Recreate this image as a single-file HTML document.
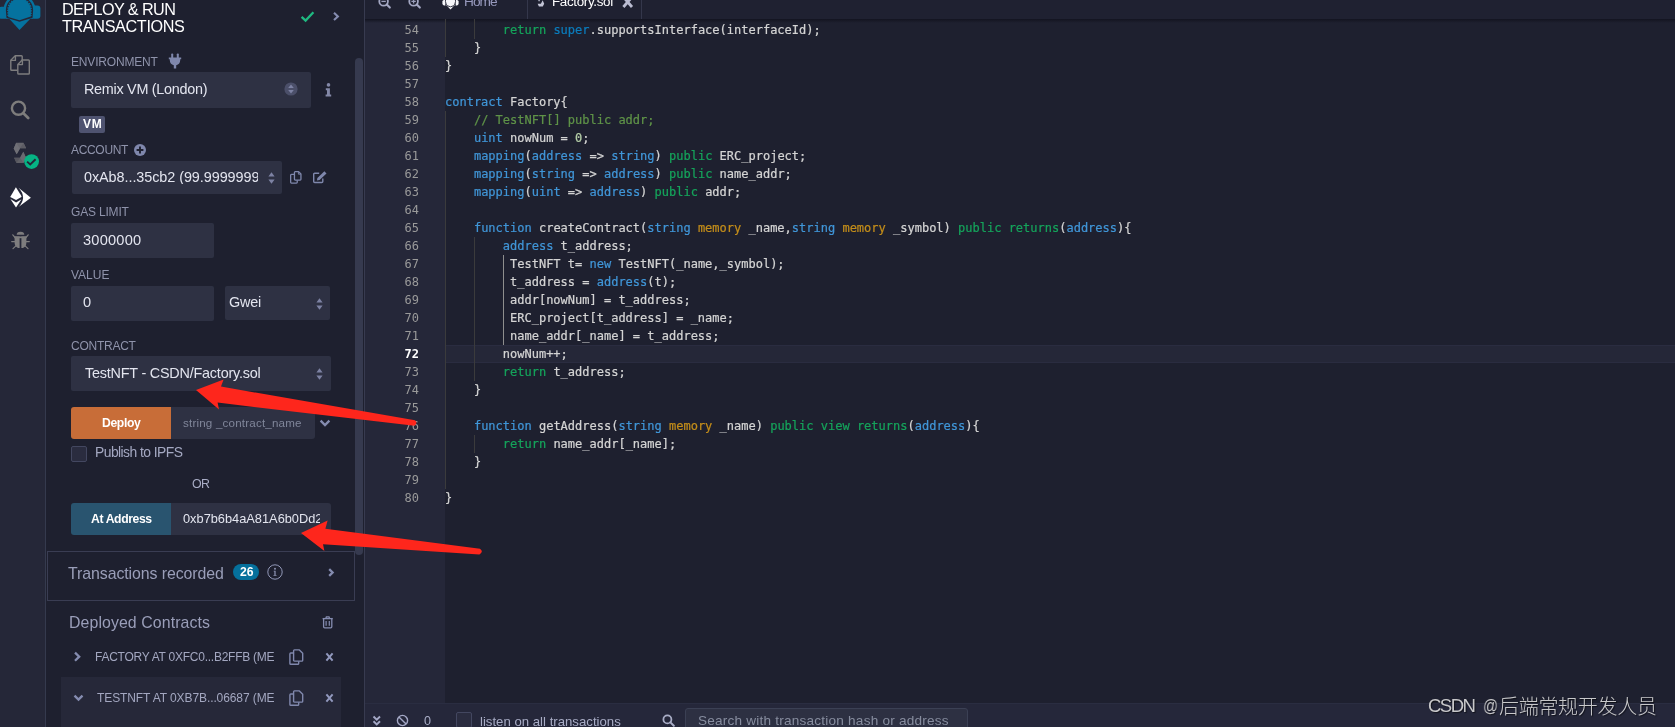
<!DOCTYPE html>
<html lang="en"><head><meta charset="utf-8"><title>Remix - Deploy &amp; Run</title>
<style>
html,body{margin:0;padding:0}
body{width:1675px;height:727px;overflow:hidden;position:relative;background:#1e202f;font-family:"Liberation Sans","Noto Sans CJK SC",sans-serif}
.a{position:absolute;display:block}
.t{position:absolute;white-space:nowrap;line-height:1;will-change:transform}
.code{position:absolute;left:445.4px;white-space:pre;font-family:"DejaVu Sans Mono","Liberation Mono",monospace;font-size:12px;line-height:18px;height:18px;color:#d4d4d4;will-change:transform;-webkit-text-stroke:0.22px}
.ln{position:absolute;left:365px;width:54px;text-align:right;font-family:"DejaVu Sans Mono","Liberation Mono",monospace;font-size:12px;line-height:18px;height:18px;color:#9a9a9a;will-change:transform}
i{font-style:normal}
.k{color:#4096d8}.g{color:#15a35b}.s{color:#0b7dbd}.m{color:#c38d1a}.c{color:#5f9348}.n{color:#b5cea8}

</style></head>
<body>
<div class="a" style="left:0.00px;top:0.00px;width:45.00px;height:727.00px;background:#252738;"></div>
<div class="a" style="left:45.00px;top:0.00px;width:1.00px;height:727.00px;background:#353a4e;"></div>
<div class="a" style="left:46.00px;top:0.00px;width:318.00px;height:727.00px;background:#1e202f;"></div>
<div class="a" style="left:364.00px;top:0.00px;width:1.00px;height:727.00px;background:#383b50;"></div>
<div class="a" style="left:365.00px;top:0.00px;width:1310.00px;height:19.00px;background:#1f2131;"></div>
<div class="a" style="left:365.00px;top:19.00px;width:80.40px;height:684.00px;background:#252739;"></div>
<div class="a" style="left:365.00px;top:19.00px;width:1310.00px;height:4.00px;background:linear-gradient(#131420,rgba(19,20,32,0));"></div>
<div class="a" style="left:365.00px;top:703.00px;width:1310.00px;height:24.00px;background:#25273a;"></div>
<div class="a" style="left:365.00px;top:702.60px;width:1310.00px;height:1.00px;background:#2a2d41;"></div>
<div class="a" style="left:355.00px;top:57.60px;width:8.00px;height:497.60px;background:#363a4f;border-radius:4px;"></div>
<div class="t" style="left:62.00px;top:0.89px;font-size:16.20px;color:#ffffff;letter-spacing:-0.576px;">DEPLOY &amp; RUN</div>
<div class="t" style="left:62.00px;top:18.49px;font-size:16.20px;color:#ffffff;letter-spacing:-0.356px;">TRANSACTIONS</div>
<svg class="a" style="left:300.00px;top:9.50px;" width="15.00" height="13.00" viewBox="0 0 15 13"><path d="M1.6 6.8 L5.6 10.6 L13.4 2.2" fill="none" stroke="#1fb981" stroke-width="2.3"/></svg>
<svg class="a" style="left:332.00px;top:11.00px;" width="8.00" height="11.00" viewBox="0 0 8 11"><path d="M2 1.7 L5.9 5.4 L2 9.1" fill="none" stroke="#858cb0" stroke-width="2.1"/></svg>
<div class="t" style="left:70.60px;top:55.84px;font-size:12.00px;color:#8f93ab;letter-spacing:-0.177px;">ENVIRONMENT</div>
<svg class="a" style="left:167.50px;top:52.50px;" width="14.00" height="16.00" viewBox="0 0 14 16"><g fill="#7f87ac"><rect x="3.2" y="0.5" width="2" height="5" rx="0.8"/><rect x="8.8" y="0.5" width="2" height="5" rx="0.8"/><path d="M0.8 4.6 H13.2 V6.2 H12.2 V7.2 A5.2 5.2 0 0 1 8.2 12.2 V15.5 H5.8 V12.2 A5.2 5.2 0 0 1 1.8 7.2 V6.2 H0.8 Z"/></g></svg>
<div class="a" style="left:71.00px;top:72.40px;width:240.00px;height:35.20px;background:#2e3143;border-radius:2px;"></div>
<div class="t" style="left:84.00px;top:82.21px;font-size:14.40px;color:#e3e5ef;letter-spacing:-0.284px;">Remix VM (London)</div>
<svg class="a" style="left:284.00px;top:82.00px;" width="14.00" height="14.00" viewBox="0 0 14 14"><circle cx="7" cy="7" r="6.6" fill="#4b4f69"/><path d="M7 2.6 L9.8 6 H4.2 Z M7 11.4 L9.8 8 H4.2 Z" fill="#7d82a3"/></svg>
<svg class="a" style="left:325.40px;top:82.50px;" width="7.00" height="14.00" viewBox="0 0 7 14"><g fill="#8388a7"><circle cx="3.5" cy="1.9" r="1.8"/><path d="M0.8 5.2 H4.9 V11.6 H6.2 V13.5 H0.6 V11.6 H2 V7.2 H0.8 Z"/></g></svg>
<div class="a" style="left:79.00px;top:116.00px;width:26.00px;height:16.60px;background:#4f5370;border-radius:2px;"></div>
<div class="t" style="left:83.00px;top:118.24px;font-size:12.00px;color:#ffffff;letter-spacing:0.799px;font-weight:bold;">VM</div>
<div class="t" style="left:70.60px;top:143.84px;font-size:12.00px;color:#8f93ab;letter-spacing:-0.322px;">ACCOUNT</div>
<svg class="a" style="left:134.00px;top:143.60px;" width="12.00" height="12.00" viewBox="0 0 12 12"><circle cx="6" cy="6" r="6" fill="#7f87ac"/><path d="M6 2.6 V9.4 M2.6 6 H9.4" stroke="#1e202f" stroke-width="1.9"/></svg>
<div class="a" style="left:72.00px;top:161.00px;width:210.00px;height:33.00px;background:#2e3143;border-radius:2px;"></div>
<div class="t" style="left:84.00px;top:170.41px;font-size:14.40px;color:#e3e5ef;letter-spacing:-0.058px;width:174.3px;overflow:hidden;">0xAb8...35cb2 (99.99999999</div>
<svg class="a" style="left:267.50px;top:172.00px;" width="7.00" height="12.00" viewBox="0 0 7 12"><path d="M3.5 0.3 L6.6 4.6 H0.4 Z M3.5 11.7 L6.6 7.4 H0.4 Z" fill="#7d82a3"/></svg>
<svg class="a" style="left:290.00px;top:171.00px;" width="11.60" height="12.70" viewBox="0 0 11.6 12.7"><g fill="none" stroke="#7f87ac" stroke-width="1.3" stroke-linejoin="round"><path d="M4.45 1.45 Q4.45 .65 5.25 .65 H8.6 L10.95 3 V8.35 Q10.95 9.15 10.15 9.15 H5.25 Q4.45 9.15 4.45 8.35 Z"/><path d="M4.45 3.45 H1.45 Q.65 3.45 .65 4.25 V11.25 Q.65 12.05 1.45 12.05 H6.45 Q7.25 12.05 7.25 11.25 V9.15"/><path d="M8.4 .9 V3.2 H10.8" stroke-width="0.9"/></g></svg>
<svg class="a" style="left:313.40px;top:171.40px;" width="13.80" height="12.40" viewBox="0 0 13.8 12.4"><path d="M6.2 2.3 H1.7 Q.7 2.3 .7 3.3 V10.5 Q.7 11.5 1.7 11.5 H8.8 Q9.8 11.5 9.8 10.5 V7.4" fill="none" stroke="#7f87ac" stroke-width="1.4"/><path d="M11.4 0.3 L13.5 2.4 L6.6 9.1 L3.9 9.6 L4.4 6.9 Z" fill="#7f87ac"/></svg>
<div class="t" style="left:70.60px;top:206.04px;font-size:12.00px;color:#8f93ab;letter-spacing:-0.181px;">GAS LIMIT</div>
<div class="a" style="left:71.00px;top:223.00px;width:143.00px;height:35.00px;background:#2e3143;border-radius:2px;"></div>
<div class="t" style="left:83.40px;top:232.64px;font-size:14.60px;color:#e3e5ef;letter-spacing:0.227px;">3000000</div>
<div class="t" style="left:70.60px;top:269.24px;font-size:12.00px;color:#8f93ab;letter-spacing:-0.016px;">VALUE</div>
<div class="a" style="left:71.00px;top:285.60px;width:143.00px;height:35.20px;background:#2e3143;border-radius:2px;"></div>
<div class="t" style="left:83.40px;top:294.64px;font-size:14.60px;color:#e3e5ef;">0</div>
<div class="a" style="left:225.00px;top:286.00px;width:105.00px;height:34.40px;background:#2e3143;border-radius:2px;"></div>
<div class="t" style="left:229.40px;top:294.81px;font-size:14.40px;color:#e3e5ef;letter-spacing:-0.203px;">Gwei</div>
<svg class="a" style="left:315.50px;top:298.00px;" width="7.00" height="12.00" viewBox="0 0 7 12"><path d="M3.5 0.3 L6.6 4.6 H0.4 Z M3.5 11.7 L6.6 7.4 H0.4 Z" fill="#7d82a3"/></svg>
<div class="t" style="left:70.60px;top:339.84px;font-size:12.00px;color:#8f93ab;letter-spacing:-0.252px;">CONTRACT</div>
<div class="a" style="left:71.00px;top:356.00px;width:260.00px;height:35.00px;background:#2e3143;border-radius:2px;"></div>
<div class="t" style="left:84.60px;top:365.81px;font-size:14.40px;color:#e3e5ef;letter-spacing:-0.212px;">TestNFT - CSDN/Factory.sol</div>
<svg class="a" style="left:315.50px;top:368.00px;" width="7.00" height="12.00" viewBox="0 0 7 12"><path d="M3.5 0.3 L6.6 4.6 H0.4 Z M3.5 11.7 L6.6 7.4 H0.4 Z" fill="#7d82a3"/></svg>
<div class="a" style="left:71.00px;top:407.00px;width:100.00px;height:31.80px;background:#c86d38;border-radius:3px 0 0 3px;"></div>
<div class="t" style="left:102.40px;top:417.27px;font-size:12.20px;color:#ffffff;letter-spacing:-0.375px;font-weight:bold;">Deploy</div>
<div class="a" style="left:171.00px;top:407.00px;width:144.00px;height:31.80px;background:#2e3143;border-radius:0 3px 3px 0;"></div>
<div class="t" style="left:183.40px;top:416.78px;font-size:11.60px;color:#80869a;letter-spacing:0.191px;">string _contract_name</div>
<svg class="a" style="left:319.00px;top:418.50px;" width="12.00" height="8.50" viewBox="0 0 12 8.5"><path d="M1.6 1.6 L6 6 L10.4 1.6" fill="none" stroke="#858cb0" stroke-width="2.3"/></svg>
<div class="a" style="left:71.40px;top:446.40px;width:15.40px;height:15.40px;background:#2a2c3f;border:1px solid #434760;box-sizing:border-box;border-radius:2px;"></div>
<div class="t" style="left:95.00px;top:446.23px;font-size:13.90px;color:#a4a8c2;letter-spacing:-0.557px;">Publish to IPFS</div>
<div class="t" style="left:192.00px;top:477.50px;font-size:12.40px;color:#a9adc6;letter-spacing:-0.600px;">OR</div>
<div class="a" style="left:71.00px;top:503.00px;width:100.00px;height:32.00px;background:#29546f;border-radius:3px 0 0 3px;"></div>
<div class="t" style="left:91.00px;top:513.27px;font-size:12.20px;color:#ffffff;letter-spacing:-0.381px;font-weight:bold;">At Address</div>
<div class="a" style="left:171.00px;top:503.00px;width:160.00px;height:32.00px;background:#2e3143;border-radius:0 3px 3px 0;"></div>
<div class="t" style="left:183.00px;top:512.76px;font-size:12.80px;color:#e3e5ef;width:137.2px;overflow:hidden;">0xb7b6b4aA81A6b0Dd2</div>
<div class="a" style="left:47.00px;top:551.00px;width:308.00px;height:50.00px;background:transparent;border:1px solid #3a3d53;box-sizing:border-box;"></div>
<div class="t" style="left:68.40px;top:565.54px;font-size:15.90px;color:#9a9eb9;letter-spacing:-0.080px;">Transactions recorded</div>
<div class="a" style="left:232.90px;top:564.00px;width:26.30px;height:15.90px;background:#05709c;border-radius:8px;"></div>
<div class="t" style="left:239.70px;top:565.77px;font-size:12.20px;color:#ffffff;letter-spacing:0.029px;font-weight:bold;">26</div>
<svg class="a" style="left:267.30px;top:563.90px;" width="16.00" height="16.00" viewBox="0 0 16 16"><circle cx="8" cy="8" r="7.2" fill="none" stroke="#9298b8" stroke-width="1"/><g fill="#9298b8"><circle cx="8" cy="4.7" r="0.95"/><path d="M6.7 6.7 H8.6 V10.9 H9.5 V11.7 H6.5 V10.9 H7.4 V7.5 H6.7 Z"/></g></svg>
<svg class="a" style="left:326.50px;top:566.70px;" width="8.00" height="11.00" viewBox="0 0 8 11"><path d="M2.2 2.2 L5.6 5.5 L2.2 8.8" fill="none" stroke="#858cb0" stroke-width="2.3"/></svg>
<div class="t" style="left:69.40px;top:614.94px;font-size:15.90px;color:#9a9eb9;letter-spacing:0.080px;">Deployed Contracts</div>
<svg class="a" style="left:322.00px;top:616.40px;" width="11.40" height="12.60" viewBox="0 0 11.4 12.6"><g fill="none" stroke="#858cb0" stroke-width="1.3"><path d="M0.6 2.6 H10.8"/><path d="M3.8 2.4 L4.4 0.8 H7 L7.6 2.4"/><path d="M1.6 2.8 V10.8 Q1.6 11.9 2.7 11.9 H8.7 Q9.8 11.9 9.8 10.8 V2.8"/><path d="M4.1 5 V9.8 M7.3 5 V9.8" stroke-width="1.2"/></g></svg>
<svg class="a" style="left:72.80px;top:651.10px;" width="9.00" height="11.40" viewBox="0 0 9 11.4"><path d="M2 1.6 L6.2 5.7 L2 9.8" fill="none" stroke="#858cb0" stroke-width="2.3"/></svg>
<div class="t" style="left:95.40px;top:651.24px;font-size:12.00px;color:#a3a7c0;letter-spacing:-0.247px;">FACTORY AT 0XFC0...B2FFB (ME</div>
<svg class="a" style="left:289.40px;top:648.60px;" width="14.60" height="16.20" viewBox="0 0 14.6 16.2"><g fill="none" stroke="#8088ad" stroke-width="1.4" stroke-linejoin="round"><path d="M4.6 3.4 V1.8 Q4.6 0.9 5.5 0.9 H10.4 L13.7 4.2 V11.2 Q13.7 12.1 12.8 12.1 H5.5 Q4.6 12.1 4.6 11.2 V3.4"/><path d="M4.6 4 H1.8 Q0.9 4 0.9 4.9 V14.4 Q0.9 15.3 1.8 15.3 H8.8 Q9.7 15.3 9.7 14.4 V12.2"/></g></svg>
<svg class="a" style="left:324.50px;top:652.00px;" width="9.00" height="10.00" viewBox="0 0 9 10"><path d="M1.4 1.4 L7.6 8.6 M7.6 1.4 L1.4 8.6" fill="none" stroke="#9299be" stroke-width="2"/></svg>
<div class="a" style="left:61.00px;top:677.00px;width:279.60px;height:50.00px;background:#262839;"></div>
<svg class="a" style="left:72.70px;top:693.80px;" width="11.00" height="8.00" viewBox="0 0 11 8"><path d="M1.5 1.6 L5.5 5.6 L9.5 1.6" fill="none" stroke="#858cb0" stroke-width="2.3"/></svg>
<div class="t" style="left:97.40px;top:692.24px;font-size:12.00px;color:#a3a7c0;letter-spacing:-0.092px;">TESTNFT AT 0XB7B...06687 (ME</div>
<svg class="a" style="left:289.40px;top:689.60px;" width="14.60" height="16.20" viewBox="0 0 14.6 16.2"><g fill="none" stroke="#8088ad" stroke-width="1.4" stroke-linejoin="round"><path d="M4.6 3.4 V1.8 Q4.6 0.9 5.5 0.9 H10.4 L13.7 4.2 V11.2 Q13.7 12.1 12.8 12.1 H5.5 Q4.6 12.1 4.6 11.2 V3.4"/><path d="M4.6 4 H1.8 Q0.9 4 0.9 4.9 V14.4 Q0.9 15.3 1.8 15.3 H8.8 Q9.7 15.3 9.7 14.4 V12.2"/></g></svg>
<svg class="a" style="left:324.50px;top:693.00px;" width="9.00" height="10.00" viewBox="0 0 9 10"><path d="M1.4 1.4 L7.6 8.6 M7.6 1.4 L1.4 8.6" fill="none" stroke="#9299be" stroke-width="2"/></svg>
<svg class="a" style="left:0.00px;top:0.00px;" width="42.00" height="31.00" viewBox="0 0 42 31"><defs><clipPath id="lgc"><rect x="-2" y="-10" width="46" height="28.8"/></clipPath></defs>
<g fill="#05729f">
<rect x="-1.4" y="6.8" width="9.6" height="12" rx="3"/>
<rect x="30.8" y="5.6" width="9.6" height="13.2" rx="3"/>
<circle cx="19.5" cy="10" r="15.9" clip-path="url(#lgc)"/>
<path d="M9 18.6 L30.6 18.6 L19.5 29.9 Z"/>
</g>
<path d="M5.9 10 A13.6 13.6 0 0 1 33.1 10 L32.6 17.7 L19.5 21.8 L6.4 17.7 Z" fill="#252738"/>
<path d="M8.1 10 A11.4 11.4 0 0 1 30.9 10 L30.8 16.6 L19.5 20.3 L8.2 16.9 Z" fill="#05729f"/>
<path d="M8.1 16 L7.9 10 A11.6 11.6 0 0 1 31.1 10 L30.9 16" fill="none" stroke="#05729f" stroke-width="1.5" stroke-dasharray="1.25 1.25"/>
</svg>
<svg class="a" style="left:9.00px;top:54.00px;" width="22.00" height="22.00" viewBox="0 0 22 22"><g fill="none" stroke="#7e7d7e" stroke-width="1.4" stroke-linejoin="round">
<path d="M8.6 16.2 H2.6 Q1.8 16.2 1.8 15.4 V6.2 L6.2 1.8 H12.4 Q13.2 1.8 13.2 2.6 V6"/>
<path d="M2 6.4 H6.4 V2"/>
<path d="M8.8 19.2 V10.4 L13.2 6 H19.5 Q20.3 6 20.3 6.8 V19.2 Q20.3 20 19.5 20 H9.6 Q8.8 20 8.8 19.2 Z" fill="#252738"/>
<path d="M9 10.6 H13.4 V6.2"/>
</g></svg>
<svg class="a" style="left:10.00px;top:99.00px;" width="20.00" height="21.00" viewBox="0 0 20 21"><circle cx="8.5" cy="9.2" r="6.6" fill="none" stroke="#7e7d7c" stroke-width="2.4"/><path d="M13.4 14.2 L18.2 19" stroke="#7e7d7c" stroke-width="2.7" stroke-linecap="round"/></svg>
<svg class="a" style="left:13.00px;top:142.00px;" width="14.00" height="22.00" viewBox="0 0 14 22"><g>
<path d="M3.2 0.8 H10.5 L13.1 6.3 H7.1 L3.7 12.3 L0.7 6.5 Z" fill="#67676e"/>
<path d="M3.2 0.8 L6.9 6.4 L3.7 12.3 L0.7 6.5 Z" fill="#6f6f76"/>
<path d="M10.5 0.8 L13.1 6.3 H7.1 Z" fill="#5c5c64"/>
<path d="M1.1 15.7 H7.1 L10.3 9.7 L13.1 15.7 L10.5 20.9 H3.5 Z" fill="#606067"/>
<path d="M10.3 9.7 L13.1 15.7 L10.5 20.9 L7.1 15.7 Z" fill="#6a6a71"/>
<path d="M1.1 15.7 H7.1 L3.5 20.9 Z" fill="#56565e"/>
</g></svg>
<svg class="a" style="left:24.40px;top:153.80px;" width="15.20" height="15.20" viewBox="0 0 15.2 15.2"><circle cx="7.6" cy="7.6" r="7.4" fill="#06b384"/><path d="M3.1 7.6 L6.2 10.4 L11.6 5.2" fill="none" stroke="#252738" stroke-width="1.9"/></svg>
<svg class="a" style="left:9.50px;top:186.50px;" width="22.00" height="21.00" viewBox="0 0 22 21"><g fill="#ffffff">
<path d="M5.9 0.3 L11.9 9.8 L6.1 13.1 L0.2 10.1 Z"/>
<path d="M0.4 12.1 L6.1 15.5 L11.5 12.3 L6 20.5 Z"/>
</g>
<path d="M7 0.2 L19.6 10.8 L7 20.6 Q16.6 10.5 7 0.2 Z" fill="#252738"/>
<path d="M8.5 0.7 L20.9 10.8 L8.5 20.1 Q17.6 10.5 8.5 0.7 Z" fill="#ffffff"/></svg>
<svg class="a" style="left:10.50px;top:231.00px;" width="19.00" height="19.00" viewBox="0 0 19 19"><g fill="#7e7d7e">
<path d="M5.7 3.8 A3.8 3.1 0 0 1 13.3 3.8 Z"/>
<path d="M3.6 5.4 H8.6 V17.1 H7 Q3.6 15.6 3.6 11.6 Z"/>
<path d="M15.4 5.4 H10.4 V17.1 H12 Q15.4 15.6 15.4 11.6 Z"/>
<rect x="3.6" y="5.4" width="11.8" height="1.8"/>
</g>
<g stroke="#7e7d7e" stroke-width="1.2" fill="none" stroke-linecap="round">
<path d="M0.7 10.6 H3.6 M15.4 10.6 H18.3"/>
<path d="M1.8 3.8 L4.5 7 M17.2 3.8 L14.5 7"/>
<path d="M2 17.7 L4.9 14.8 M17 17.7 L14.1 14.8"/>
</g></svg>
<svg class="a" style="left:377.50px;top:-4.20px;" width="13.00" height="13.00" viewBox="0 0 13 13"><circle cx="5.6" cy="5.4" r="4.3" fill="none" stroke="#a3a7c2" stroke-width="1.8"/><path d="M8.8 8.6 L11.8 11.6" stroke="#a3a7c2" stroke-width="2.1" stroke-linecap="round"/><path d="M3.4 5.4 H7.8" stroke="#9a9eb9" stroke-width="1.3"/></svg>
<svg class="a" style="left:407.50px;top:-4.20px;" width="13.00" height="13.00" viewBox="0 0 13 13"><circle cx="5.6" cy="5.4" r="4.3" fill="none" stroke="#a3a7c2" stroke-width="1.8"/><path d="M8.8 8.6 L11.8 11.6" stroke="#a3a7c2" stroke-width="2.1" stroke-linecap="round"/><path d="M3.4 5.4 H7.8 M5.6 3.2 V7.6" stroke="#9a9eb9" stroke-width="1.3"/></svg>
<svg class="a" style="left:441.50px;top:-7.00px;" width="17.00" height="17.00" viewBox="0 0 17 17"><g fill="#f6f6fa"><path d="M0.4 8.6 Q0.4 7 2 7 H3.4 V12.4 H2 Q0.4 12.4 0.4 10.6 Z"/><path d="M16.6 8.6 Q16.6 7 15 7 H13.6 V12.4 H15 Q16.6 12.4 16.6 10.6 Z"/><circle cx="8.5" cy="8" r="5.6"/><path d="M4.2 12 H12.8 L8.5 16.4 Z"/></g><path d="M5 12.6 L8.5 13.8 L12 12.6 M3.9 4.5 Q2.7 8.4 4.4 12 M13.1 4.5 Q14.3 8.4 12.6 12" fill="none" stroke="#1f2131" stroke-width="0.9"/></svg>
<div class="t" style="left:464.40px;top:-5.30px;font-size:13.70px;color:#9799bd;letter-spacing:-0.982px;">Home</div>
<div class="a" style="left:527.40px;top:0.00px;width:1.00px;height:19.00px;background:#34374b;"></div>
<div class="a" style="left:641.40px;top:0.00px;width:1.00px;height:19.00px;background:#34374b;"></div>
<svg class="a" style="left:537.00px;top:-5.40px;" width="7.70" height="12.10" viewBox="0 0 14 22"><g fill="#c3c5d6"><path d="M3.2 0.8 H10.5 L13.1 6.3 H7.1 L3.7 12.3 L0.7 6.5 Z"/><path d="M1.1 15.7 H7.1 L10.3 9.7 L13.1 15.7 L10.5 20.9 H3.5 Z"/></g></svg>
<div class="t" style="left:552.40px;top:-5.34px;font-size:13.40px;color:#ffffff;letter-spacing:-0.333px;">Factory.sol</div>
<svg class="a" style="left:622.00px;top:-4.00px;" width="11.50" height="12.00" viewBox="0 0 11.5 12"><path d="M1.4 1 L10 11 M10 1 L1.4 11" fill="none" stroke="#babcd1" stroke-width="2.8"/></svg>
<div class="a" style="left:445.40px;top:344.80px;width:1230.00px;height:18.00px;background:#252738;border-top:1px solid #2a2c40;border-bottom:1px solid #2a2c40;box-sizing:border-box;"></div>
<div class="a" style="left:445.00px;top:19.00px;width:1.00px;height:37.80px;background:#3b3b3c;"></div>
<div class="a" style="left:445.00px;top:110.80px;width:1.00px;height:378.00px;background:#3b3b3c;"></div>
<div class="a" style="left:474.20px;top:19.00px;width:1.00px;height:19.80px;background:#3b3b3c;"></div>
<div class="a" style="left:474.20px;top:236.80px;width:1.00px;height:144.00px;background:#3b3b3c;"></div>
<div class="a" style="left:474.20px;top:434.80px;width:1.00px;height:18.00px;background:#3b3b3c;"></div>
<div class="a" style="left:503.20px;top:254.80px;width:1.00px;height:90.00px;background:#8e8e8e;"></div>
<div class="ln" style="top:21.20px;">54</div>
<div class="code" style="top:21.20px">        <i class="g">return</i> <i class="s">super</i>.supportsInterface(interfaceId);</div>
<div class="ln" style="top:39.20px;">55</div>
<div class="code" style="top:39.20px">    }</div>
<div class="ln" style="top:57.20px;">56</div>
<div class="code" style="top:57.20px">}</div>
<div class="ln" style="top:75.20px;">57</div>
<div class="ln" style="top:93.20px;">58</div>
<div class="code" style="top:93.20px"><i class="k">contract</i> Factory{</div>
<div class="ln" style="top:111.20px;">59</div>
<div class="code" style="top:111.20px">    <i class="c">// TestNFT[] public addr;</i></div>
<div class="ln" style="top:129.20px;">60</div>
<div class="code" style="top:129.20px">    <i class="k">uint</i> nowNum = <i class="n">0</i>;</div>
<div class="ln" style="top:147.20px;">61</div>
<div class="code" style="top:147.20px">    <i class="k">mapping</i>(<i class="k">address</i> =&gt; <i class="k">string</i>) <i class="g">public</i> ERC_project;</div>
<div class="ln" style="top:165.20px;">62</div>
<div class="code" style="top:165.20px">    <i class="k">mapping</i>(<i class="k">string</i> =&gt; <i class="k">address</i>) <i class="g">public</i> name_addr;</div>
<div class="ln" style="top:183.20px;">63</div>
<div class="code" style="top:183.20px">    <i class="k">mapping</i>(<i class="k">uint</i> =&gt; <i class="k">address</i>) <i class="g">public</i> addr;</div>
<div class="ln" style="top:201.20px;">64</div>
<div class="ln" style="top:219.20px;">65</div>
<div class="code" style="top:219.20px">    <i class="k">function</i> createContract(<i class="k">string</i> <i class="m">memory</i> _name,<i class="k">string</i> <i class="m">memory</i> _symbol) <i class="g">public</i> <i class="g">returns</i>(<i class="k">address</i>){</div>
<div class="ln" style="top:237.20px;">66</div>
<div class="code" style="top:237.20px">        <i class="k">address</i> t_address;</div>
<div class="ln" style="top:255.20px;">67</div>
<div class="code" style="top:255.20px">         TestNFT t= <i class="k">new</i> TestNFT(_name,_symbol);</div>
<div class="ln" style="top:273.20px;">68</div>
<div class="code" style="top:273.20px">         t_address = <i class="k">address</i>(t);</div>
<div class="ln" style="top:291.20px;">69</div>
<div class="code" style="top:291.20px">         addr[nowNum] = t_address;</div>
<div class="ln" style="top:309.20px;">70</div>
<div class="code" style="top:309.20px">         ERC_project[t_address] = _name;</div>
<div class="ln" style="top:327.20px;">71</div>
<div class="code" style="top:327.20px">         name_addr[_name] = t_address;</div>
<div class="ln" style="top:345.20px;color:#ffffff;font-weight:bold;">72</div>
<div class="code" style="top:345.20px">        nowNum++;</div>
<div class="ln" style="top:363.20px;">73</div>
<div class="code" style="top:363.20px">        <i class="g">return</i> t_address;</div>
<div class="ln" style="top:381.20px;">74</div>
<div class="code" style="top:381.20px">    }</div>
<div class="ln" style="top:399.20px;">75</div>
<div class="ln" style="top:417.20px;">76</div>
<div class="code" style="top:417.20px">    <i class="k">function</i> getAddress(<i class="k">string</i> <i class="m">memory</i> _name) <i class="g">public</i> <i class="g">view</i> <i class="g">returns</i>(<i class="k">address</i>){</div>
<div class="ln" style="top:435.20px;">77</div>
<div class="code" style="top:435.20px">        <i class="g">return</i> name_addr[_name];</div>
<div class="ln" style="top:453.20px;">78</div>
<div class="code" style="top:453.20px">    }</div>
<div class="ln" style="top:471.20px;">79</div>
<div class="ln" style="top:489.20px;">80</div>
<div class="code" style="top:489.20px">}</div>
<svg class="a" style="left:372.00px;top:714.70px;" width="9.50" height="12.00" viewBox="0 0 9.5 12"><path d="M1.5 1.5 L4.75 4.7 L8 1.5 M1.5 6.3 L4.75 9.5 L8 6.3" fill="none" stroke="#a4a8c6" stroke-width="1.9"/></svg>
<svg class="a" style="left:396.00px;top:714.00px;" width="13.00" height="13.00" viewBox="0 0 13 13"><circle cx="6.5" cy="6.5" r="5.1" fill="none" stroke="#a4a8c6" stroke-width="1.4"/><path d="M2.9 2.9 L10.1 10.1" stroke="#a4a8c6" stroke-width="1.4"/></svg>
<div class="t" style="left:424.40px;top:715.33px;font-size:12.60px;color:#a9adc6;">0</div>
<div class="a" style="left:456.00px;top:712.40px;width:15.60px;height:15.60px;background:#2a2c3f;border:1px solid #434760;box-sizing:border-box;border-radius:2px;"></div>
<div class="t" style="left:480.00px;top:714.83px;font-size:13.20px;color:#a9adc6;">listen on all transactions</div>
<svg class="a" style="left:662.20px;top:713.80px;" width="13.00" height="13.00" viewBox="0 0 13 13"><circle cx="5.4" cy="5.4" r="4" fill="none" stroke="#a9adc6" stroke-width="1.8"/><path d="M8.4 8.4 L11.8 11.8" stroke="#a9adc6" stroke-width="2" stroke-linecap="round"/></svg>
<div class="a" style="left:685.20px;top:708.40px;width:282.40px;height:26.00px;background:#2d3042;border:1px solid #3b4054;box-sizing:border-box;border-radius:3px;"></div>
<div class="t" style="left:698.40px;top:714.49px;font-size:13.60px;color:#878d9f;letter-spacing:0.209px;">Search with transaction hash or address</div>
<svg class="a" style="left:0;top:0" width="1675" height="727" viewBox="0 0 1675 727"><g fill="#fe261c"><path d="M196 390 L223.6 379.6 L221 386.6 L415 420.2 Q418.2 423 414.4 425.8 L217.6 402.6 L219 409.4 Z"/><path d="M301 533 L327.6 520.6 L325.4 528.8 L480 548.8 Q484 551.6 479.4 554.6 L323 544.2 L324.4 551 Z"/></g></svg>
<div class="t" style="left:1427.60px;top:697.06px;font-size:18.60px;color:#c8c8ca;letter-spacing:-1.568px;color:#c8c8ca;text-shadow:1px 1px 1px rgba(0,0,0,.55);">CSDN</div>
<div class="t" style="left:1483.4px;top:697.2px;font-size:18.8px;transform-origin:0 0;transform:scaleX(0.79);color:#c8c8ca;text-shadow:1px 1px 1px rgba(0,0,0,.55);">@</div>
<div class="t" style="left:1499.4px;top:695.6px;font-size:20px;letter-spacing:-0.3px;font-weight:300;font-family:'Noto Sans CJK SC','WenQuanYi Zen Hei',sans-serif;color:#c8c8ca;text-shadow:1px 1px 1px rgba(0,0,0,.55);">后端常规开发人员</div>
</body></html>
